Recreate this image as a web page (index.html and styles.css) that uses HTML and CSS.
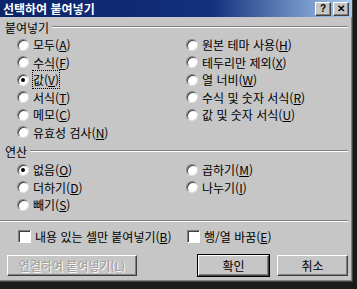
FILE: index.html
```html
<!DOCTYPE html>
<html lang="ko">
<head>
  <meta charset="UTF-8" />
  <title>선택하여 붙여넣기</title>
  <link rel="stylesheet" href="styles.css">
</head>
<body>
  <div class="dialog">
    <div class="titlebar">
      <span class="title">선택하여 붙여넣기</span>
      <div class="caption-btns">
        <span class="cbtn">?</span>
        <span class="cbtn">✕</span>
      </div>
    </div>

    <div class="content">
      <div class="group-head"><span>붙여넣기</span><i class="rule"></i></div>
      <div class="opts paste">
        <label class="opt"><span class="radio"></span><span>모두(<u>A</u>)</span></label>
        <label class="opt"><span class="radio"></span><span>수식(<u>F</u>)</span></label>
        <label class="opt"><span class="radio on"></span><span class="focus">값(<u>V</u>)</span></label>
        <label class="opt"><span class="radio"></span><span>서식(<u>T</u>)</span></label>
        <label class="opt"><span class="radio"></span><span>메모(<u>C</u>)</span></label>
        <label class="opt"><span class="radio"></span><span>유효성 검사(<u>N</u>)</span></label>
        <label class="opt"><span class="radio"></span><span>원본 테마 사용(<u>H</u>)</span></label>
        <label class="opt"><span class="radio"></span><span>테두리만 제외(<u>X</u>)</span></label>
        <label class="opt"><span class="radio"></span><span>열 너비(<u>W</u>)</span></label>
        <label class="opt"><span class="radio"></span><span>수식 및 숫자 서식(<u>R</u>)</span></label>
        <label class="opt"><span class="radio"></span><span>값 및 숫자 서식(<u>U</u>)</span></label>
      </div>

      <div class="group-head ops-head"><span>연산</span><i class="rule"></i></div>
      <div class="opts ops">
        <label class="opt"><span class="radio on"></span><span>없음(<u>O</u>)</span></label>
        <label class="opt"><span class="radio"></span><span>더하기(<u>D</u>)</span></label>
        <label class="opt"><span class="radio"></span><span>빼기(<u>S</u>)</span></label>
        <label class="opt"><span class="radio"></span><span>곱하기(<u>M</u>)</span></label>
        <label class="opt"><span class="radio"></span><span>나누기(<u>I</u>)</span></label>
      </div>

      <i class="rule sep"></i>

      <div class="checks">
        <label class="opt"><span class="check"></span><span>내용 있는 셀만 붙여넣기(<u>B</u>)</span></label>
        <label class="opt"><span class="check"></span><span>행/열 바꿈(<u>E</u>)</span></label>
      </div>

      <div class="buttons">
        <button class="btn link" disabled>연결하여 붙여넣기(L)</button>
        <div class="right-btns">
          <button class="btn default">확인</button>
          <button class="btn">취소</button>
        </div>
      </div>
    </div>
  </div>
</body>
</html>
```

FILE: styles.css
```css
body {
  margin: 0;
  width: 357px;
  height: 289px;
  overflow: hidden;
  background-color: #1a1a1a;
  font-family: "Noto Sans CJK KR", "Liberation Sans", sans-serif;
  font-size: 12px;
  color: #000;
}

.dialog {
  width: 352px;
  height: 281px;
  background-color: #c6c6c6;
  border-right: 1px solid #404040;
  border-bottom: 1px solid #404040;
  box-shadow: inset -1px -1px 0 #808080;
}

.titlebar {
  height: 17px;
  display: flex;
  align-items: center;
  justify-content: space-between;
  padding: 0 3px 0 3px;
  background: linear-gradient(to right, #0a246a 0%, #142f7c 60%, #a6caf0 100%);
}

.title {
  color: #fff;
  font-weight: bold;
  line-height: 17px;
}

.caption-btns {
  display: flex;
  gap: 2px;
}

.cbtn {
  width: 14px;
  height: 12px;
  display: flex;
  align-items: center;
  justify-content: center;
  background-color: #c6c6c6;
  font-family: "Liberation Sans", sans-serif;
  font-size: 10px;
  font-weight: bold;
  line-height: 1;
  border: 1px solid;
  border-color: #fff #404040 #404040 #fff;
  box-shadow: inset -1px -1px 0 #808080;
}

.content {
  padding: 3px 4px 0 5px;
}

.group-head {
  display: flex;
  align-items: center;
  height: 14px;
  gap: 3px;
}

.rule {
  display: block;
  flex: 1;
  height: 0;
  border-top: 1px solid #808080;
  border-bottom: 1px solid #fff;
}

.opts {
  display: grid;
  grid-auto-flow: column;
  grid-template-columns: 169px 1fr;
  padding-left: 12px;
}

.paste {
  margin-top: 2px;
  grid-template-rows: repeat(6, 17.5px);
}

.ops-head {
  margin-top: 3px;
}

.ops {
  margin-top: 3px;
  grid-template-rows: repeat(3, 17.5px);
}

.opt {
  display: flex;
  align-items: center;
  gap: 4px;
  white-space: nowrap;
}

.radio {
  width: 12px;
  height: 12px;
  box-sizing: border-box;
  border-radius: 50%;
  background-color: #fff;
  border: 1px solid;
  border-color: #808080 #e0e0e0 #e0e0e0 #808080;
  box-shadow: inset 1px 1px 0 #404040;
  display: flex;
  align-items: center;
  justify-content: center;
}

.radio.on::after {
  content: "";
  width: 4px;
  height: 4px;
  border-radius: 50%;
  background-color: #000;
}

.focus {
  outline: 1px dotted #000;
  outline-offset: 0;
}

.sep {
  margin: 6px 0 0 -5px;
}

.checks {
  display: grid;
  grid-template-columns: 169px 1fr;
  height: 17.5px;
  margin-top: 6px;
  padding-left: 13px;
}

.check {
  width: 13px;
  height: 13px;
  box-sizing: border-box;
  background-color: #fff;
  border: 1px solid;
  border-color: #808080 #fff #fff #808080;
  box-shadow: inset 1px 1px 0 #404040;
}

.buttons {
  display: flex;
  justify-content: space-between;
  margin-top: 10px;
  padding-left: 2px;
}

.right-btns {
  display: flex;
  gap: 8px;
}

.btn {
  height: 21px;
  width: 71px;
  padding: 0;
  font-family: inherit;
  font-size: 12px;
  color: #000;
  background-color: #c6c6c6;
  border: 1px solid;
  border-color: #fff #404040 #404040 #fff;
  box-shadow: inset -1px -1px 0 #808080;
}

.btn.link {
  width: 130px;
  color: #9a9a9a;
  text-shadow: 1px 1px 0 #fff;
}

.btn.default {
  outline: 1px solid #000;
  outline-offset: 0;
}
```
